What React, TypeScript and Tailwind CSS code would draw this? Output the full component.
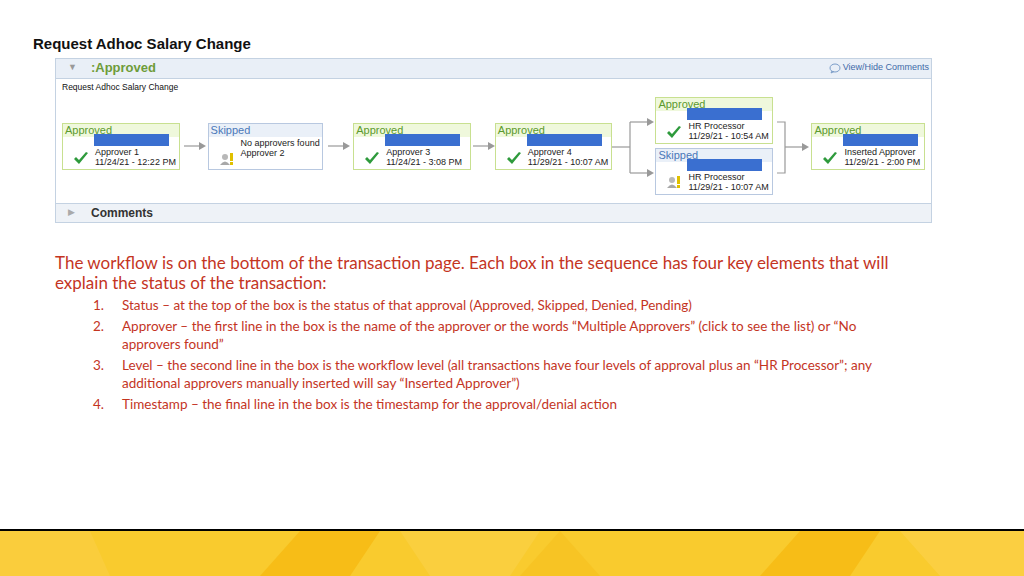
const arial = { fontFamily: '"Liberation Sans", Arial, sans-serif' };

function Check() {
  return (
    <svg width="16" height="14" viewBox="0 0 16 14">
      <path d="M1 8 L6 13 L15 2 L13 1 L6 9 L3 6 Z" fill="#2e9a3c" />
    </svg>
  );
}

function Warn() {
  return (
    <svg width="16" height="16" viewBox="0 0 16 16">
      <circle cx="6" cy="6" r="3" fill="#b8b8b8" />
      <path d="M1 14 Q6 7 11 14 Z" fill="#a8a8a8" />
      <rect x="11" y="2" width="3" height="8" fill="#e0c000" />
      <rect x="11" y="11" width="3" height="3" fill="#e0c000" />
    </svg>
  );
}

function Arrow({ w = 22 }: { w?: number }) {
  return (
    <svg width={w} height="10" viewBox={`0 0 ${w} 10`} className="shrink-0">
      <line x1="0" y1="5" x2={w - 6} y2="5" stroke="#999" strokeWidth="1.2" />
      <path d={`M${w - 7} 1 L${w} 5 L${w - 7} 9 Z`} fill="#999" />
    </svg>
  );
}

type BoxProps = { status: "Approved" | "Skipped"; lines: string[]; w?: number; bar?: boolean };

function Box({ status, lines, w = 118, bar = true }: BoxProps) {
  const ok = status === "Approved";
  return (
    <div
      className={`relative h-[47px] border bg-white ${ok ? "border-[#c8e090]" : "border-[#b8c8e0]"}`}
      style={{ width: w, ...arial }}
    >
      <div className={`h-[13px] pl-[2px] text-[11px] leading-[13px] ${ok ? "bg-[#eff8dc] text-[#5c9a2e]" : "bg-[#eaf0f8] text-[#4a78b8]"}`}>
        {status}
      </div>
      {bar && <div className="absolute left-[31px] top-[10px] h-[12px] w-[75px] bg-[#3a6fd0]" />}
      <div className="flex items-end pl-[10px]">
        <div className="w-[22px] pb-[2px]">{ok ? <Check /> : <Warn />}</div>
        <div className={`text-[9px] leading-[10px] text-[#222] ${bar ? "pt-[10px]" : "pt-[1px] h-[32px]"}`}>
          {lines.map((l) => (
            <div key={l}>{l}</div>
          ))}
        </div>
      </div>
    </div>
  );
}

export default function App() {
  return (
    <div className="relative h-[576px] w-[1024px] overflow-hidden bg-white">
      <div className="pl-[33px] pt-[33px]">
        <h1 className="text-[15px] font-bold text-[#111]" style={arial}>
          Request Adhoc Salary Change
        </h1>
      </div>
      <div className="ml-[55px] mt-[2px] w-[877px] border border-[#c4d2e2]" style={arial}>
        <div className="flex h-[20px] items-center justify-between border-b border-[#c4d2e2] bg-[#e9eff7] pl-[12px] pr-[2px]">
          <div className="flex items-center gap-[14px]">
            <span className="text-[9px] text-[#999]">▼</span>
            <span className="text-[13px] font-bold text-[#6e9c3a]">:Approved</span>
          </div>
          <div className="flex items-center gap-[2px] text-[9px] text-[#3f6aa8]">
            <svg width="12" height="11" viewBox="0 0 12 11">
              <ellipse cx="6" cy="5" rx="5" ry="4" fill="none" stroke="#7a9cc8" />
              <path d="M3 8 L2 10 L5 8.5" fill="none" stroke="#7a9cc8" />
            </svg>
            View/Hide Comments
          </div>
        </div>
        <div className="h-[124px] px-[6px] pt-[2px]">
          <div className="text-[8.5px] text-[#111]">Request Adhoc Salary Change</div>
          <div className="mt-[4px] flex items-center">
            <Box status="Approved" lines={["Approver 1", "11/24/21 - 12:22 PM"]} />
            <div className="mx-[4px] w-[20px]"><Arrow /></div>
            <Box status="Skipped" w={116} bar={false} lines={["No approvers found", "Approver 2"]} />
            <div className="mx-[5px] w-[20px]"><Arrow /></div>
            <Box status="Approved" lines={["Approver 3", "11/24/21 - 3:08 PM"]} />
            <div className="mx-[2px] w-[20px]"><Arrow /></div>
            <Box status="Approved" lines={["Approver 4", "11/29/21 - 10:07 AM"]} />
            <svg width="43" height="90" viewBox="0 0 43 90" className="shrink-0">
              <line x1="0" y1="46" x2="18" y2="46" stroke="#999" strokeWidth="1.2" />
              <line x1="18" y1="21" x2="18" y2="72" stroke="#999" strokeWidth="1.2" />
              <line x1="18" y1="21" x2="36" y2="21" stroke="#999" strokeWidth="1.2" />
              <line x1="18" y1="72" x2="36" y2="72" stroke="#999" strokeWidth="1.2" />
              <path d="M35 17 L42 21 L35 25 Z" fill="#999" />
              <path d="M35 68 L42 72 L35 76 Z" fill="#999" />
            </svg>
            <div className="flex flex-col gap-[4px]">
              <Box status="Approved" lines={["HR Processor", "11/29/21 - 10:54 AM"]} />
              <Box status="Skipped" lines={["HR Processor", "11/29/21 - 10:07 AM"]} />
            </div>
            <svg width="38" height="90" viewBox="0 0 38 90" className="shrink-0">
              <path d="M4 21 H12 V72 H4" fill="none" stroke="#999" strokeWidth="1.2" />
              <line x1="12" y1="46" x2="30" y2="46" stroke="#999" strokeWidth="1.2" />
              <path d="M29 42 L36 46 L29 50 Z" fill="#999" />
            </svg>
            <Box status="Approved" w={114} lines={["Inserted Approver", "11/29/21 - 2:00 PM"]} />
          </div>
        </div>
        <div className="flex h-[19px] items-center gap-[16px] border-t border-[#c4d2e2] bg-[#eef2f7] pl-[12px]">
          <span className="text-[9px] text-[#aaa]">▶</span>
          <span className="text-[12px] font-bold text-[#333]">Comments</span>
        </div>
      </div>

      <div className="pl-[55px] pr-[110px] pt-[30px] text-[#c4351f]" style={{ fontFamily: 'Lato, "Open Sans", sans-serif' }}>
        <p className="text-[17px] leading-[20px]">
          The workflow is on the bottom of the transaction page. Each box in the sequence has four key elements that will explain the status of the transaction:
        </p>
        <ol className="mt-[3px] space-y-[3px] text-[13.5px] leading-[18px]">
          {[
            "Status – at the top of the box is the status of that approval (Approved, Skipped, Denied, Pending)",
            "Approver – the first line in the box is the name of the approver or the words “Multiple Approvers” (click to see the list) or “No approvers found”",
            "Level – the second line in the box is the workflow level (all transactions have four levels of approval plus an “HR Processor”; any additional approvers manually inserted will say “Inserted Approver”)",
            "Timestamp – the final line in the box is the timestamp for the approval/denial action",
          ].map((t, i) => (
            <li key={i} className="flex">
              <span className="w-[67px] shrink-0 pl-[38px]">{i + 1}.</span>
              <span className="pr-[20px]">{t}</span>
            </li>
          ))}
        </ol>
      </div>

      <div className="absolute bottom-0 left-0 h-[47px] w-full border-t-2 border-black bg-[#f9cb2e]">
        <svg width="1024" height="45" viewBox="0 0 1024 45">
          <path d="M300 0 H380 L350 45 H260 Z" fill="#f7bd17" />
          <path d="M800 0 H880 L850 45 H760 Z" fill="#f7bd17" />
          <path d="M400 0 H540 L510 45 H430 Z" fill="#fad24a" opacity="0.6" />
          <path d="M560 0 L600 45 H520 Z" fill="#f7c424" />
          <path d="M0 0 H90 L110 45 H0 Z" fill="#fbd04a" opacity="0.5" />
          <path d="M900 0 H1024 V45 H940 Z" fill="#fbd24e" opacity="0.6" />
        </svg>
      </div>
    </div>
  );
}
